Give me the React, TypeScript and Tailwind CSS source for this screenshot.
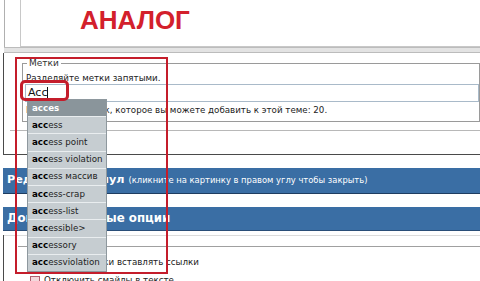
import React from "react";

const items = [
  "acces",
  "access",
  "access point",
  "access violation",
  "access массив",
  "access-crap",
  "access-list",
  "accessible>",
  "accessory",
  "accessviolation",
];

export default function App() {
  return (
    <div className="relative w-[480px] h-[281px] overflow-hidden bg-white text-[#222] font-['DejaVu_Sans',Verdana,sans-serif]">
      {/* top panel */}
      <div className="pl-[4px]">
        <div className="h-[47px] border-l border-[#b0b0b0] pl-[15px]">
          <div className="h-full border-l border-b border-[#c8c8c8] pl-[59px] pt-[5px]">
            <span className="font-['Liberation_Sans',Arial,sans-serif] font-bold text-[26px] leading-[30px] text-[#d3202c]">
              АНАЛОГ
            </span>
          </div>
        </div>
        <div className="h-[6px] border-y border-[#bcbcbc] bg-[#e3e3e3]" />
      </div>

      {/* tags panel */}
      <div className="ml-[3px] h-[102px] border-l border-b border-[#4a4a4a] pt-[4px]">
        <fieldset className="ml-[18px] border border-[#9a9a9a] pl-[3px] pb-[5px]">
          <legend className="ml-[1px] px-[2px] text-[9px] leading-[12px] text-[#333]">Метки</legend>
          <div className="mt-[3px] text-[8.7px] leading-[12px]">Разделяйте метки запятыми.</div>
          <div className="h-[18px] -ml-[1px] border border-[#a9bac9] bg-white pl-[2px] flex items-center text-[11px] text-[#111]">
            Acc<span className="inline-block w-[1px] h-[12px] bg-[#111]" />
          </div>
          <div className="mt-[2px] text-[8.7px] leading-[12px]">
            Количество меток, которое вы можете добавить к этой теме: 20.
          </div>
        </fieldset>
        <div className="mt-[8px] ml-[6px] border-t border-[#b8b8b8]" />
      </div>

      {/* blue bar 1 */}
      <div className="mt-[13px] ml-[3px] h-[26px] bg-[#3a6ea4] border-b border-[#1f3d60] pl-[4px] flex items-center text-white whitespace-nowrap">
        <span className="font-bold text-[11.2px]">Редактор формул</span>
        <span className="ml-[4px] text-[8.4px]">(кликните на картинку в правом углу чтобы закрыть)</span>
      </div>

      {/* blue bar 2 */}
      <div className="mt-[13px] ml-[3px] h-[24px] bg-[#3a6ea4] border-b border-[#2a4e78] pl-[4px] flex items-center text-white">
        <span className="font-bold text-[11.8px]">Дополнительные опции</span>
      </div>

      {/* options panel */}
      <div className="ml-[3px] border-l border-[#4a4a4a]">
        <div className="mt-[4px] border-t border-[#dcdcdc]" />
        <fieldset className="mt-[4px] ml-[14px] border-t border-[#a0a0a0] pl-[12px]">
          <legend className="ml-[4px] px-[2px] text-[8.7px] leading-[12px]">Разное</legend>
          <div className="mt-[4px] flex items-center gap-[4px] h-[14px] text-[8.7px]">
            <span className="w-[10px] h-[10px] border border-[#888] bg-white" />
            <span>Автоматически вставлять ссылки</span>
          </div>
          <div className="mt-[4px] flex items-center gap-[4px] h-[14px] text-[8.7px]">
            <span className="w-[10px] h-[10px] border border-[#b06070] bg-[#f3d8dc]" />
            <span>Отключить смайлы в тексте</span>
          </div>
        </fieldset>
      </div>

      {/* autocomplete dropdown */}
      <div className="absolute left-[27px] top-[99px] w-[80px] h-[173px] border border-[#8e989e] bg-[#c6cdd1] flex flex-col">
        {items.map((it, i) => (
          <div
            key={it}
            className={
              i === 0
                ? "flex-1 flex items-center pl-[4px] bg-[#8a959b] text-white font-bold text-[8.7px] whitespace-nowrap"
                : "flex-1 flex items-center pl-[4px] border-t border-[#e9edef] text-[#222] text-[8.7px] whitespace-nowrap"
            }
          >
            {i === 0 ? (
              it
            ) : (
              <>
                <b className="text-black">{it.slice(0, 3)}</b>
                {it.slice(3)}
              </>
            )}
          </div>
        ))}
      </div>

      {/* red annotations */}
      <div className="absolute left-[15px] top-[57px] w-[153px] h-[217px] border-2 border-[#c41d2b]" />
      <div className="absolute left-[20px] top-[80px] w-[49px] h-[21px] border-[3px] rounded-[5px] border-[#c41d2b]" />
    </div>
  );
}
